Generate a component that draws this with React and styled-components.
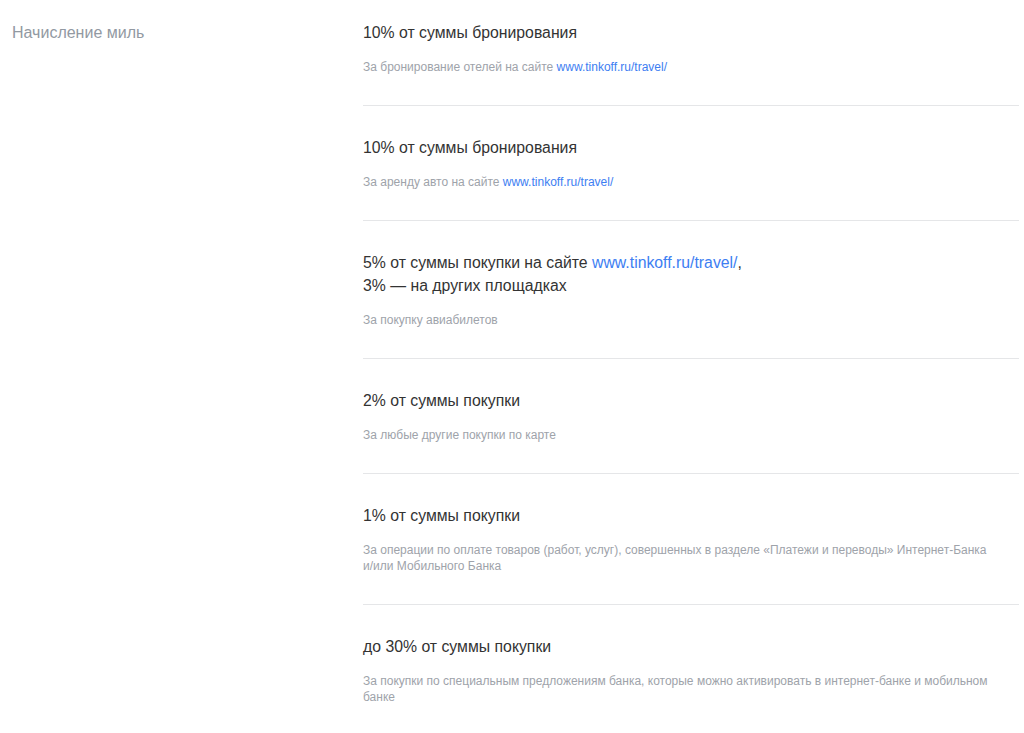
import React from "react";
import styled, { createGlobalStyle } from "styled-components";

const Global = createGlobalStyle`
  html, body { margin: 0; padding: 0; background: #fff; }
  body { font-family: "Liberation Sans", Arial, sans-serif; -webkit-font-smoothing: antialiased; }
`;

const Section = styled.section`
  display: grid;
  grid-template-columns: 351px 656px;
  padding-left: 12px;
`;

const Label = styled.div`
  font-size: 16px;
  line-height: 23px;
  color: #9299a2;
  padding-top: 21px;
`;

const List = styled.div`
  display: flex;
  flex-direction: column;
`;

const Item = styled.div`
  padding: ${(p) => (p.$first ? "21px" : "30px")} 0 30px;
  border-bottom: 1px solid #e5e6e8;
`;

const Title = styled.div`
  font-size: 15.8px;
  line-height: 23px;
  color: #333333;
`;

const Note = styled.div`
  margin-top: 15px;
  font-size: 12px;
  line-height: 16px;
  color: #9ea3aa;
`;

const Link = styled.a`
  color: #3d7ef2;
  text-decoration: none;
`;

const URL = "www.tinkoff.ru/travel/";

const items = [
  {
    title: <>10% от суммы бронирования</>,
    note: <>За бронирование отелей на сайте <Link href="#">{URL}</Link></>,
  },
  {
    title: <>10% от суммы бронирования</>,
    note: <>За аренду авто на сайте <Link href="#">{URL}</Link></>,
  },
  {
    title: (
      <>
        5% от суммы покупки на сайте <Link href="#">{URL}</Link>,<br />
        3% — на других площадках
      </>
    ),
    note: <>За покупку авиабилетов</>,
  },
  {
    title: <>2% от суммы покупки</>,
    note: <>За любые другие покупки по карте</>,
  },
  {
    title: <>1% от суммы покупки</>,
    note: (
      <>
        За операции по оплате товаров (работ, услуг), совершенных в разделе «Платежи и переводы» Интернет-Банка
        <br />и/или Мобильного Банка
      </>
    ),
  },
  {
    title: <>до 30% от суммы покупки</>,
    note: (
      <>
        За покупки по специальным предложениям банка, которые можно активировать в интернет-банке и мобильном
        <br />банке
      </>
    ),
  },
];

export default function App() {
  return (
    <>
      <Global />
      <Section>
        <Label>Начисление миль</Label>
        <List>
          {items.map((it, i) => (
            <Item key={i} $first={i === 0}>
              <Title>{it.title}</Title>
              <Note>{it.note}</Note>
            </Item>
          ))}
        </List>
      </Section>
    </>
  );
}
